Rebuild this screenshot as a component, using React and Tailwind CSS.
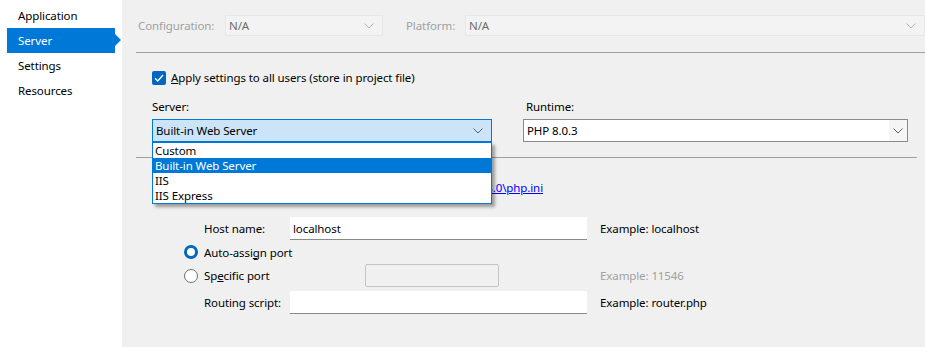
import React from 'react';

const Chevron = ({ color = '#606060' }) => (
  <svg width="10" height="6" viewBox="0 0 10 6" fill="none">
    <path d="M0.5 0.5 L5 5 L9.5 0.5" stroke={color} strokeWidth="1" />
  </svg>
);

const Combo = ({ value, className, textClass = 'text-black', chevron }) => (
  <div className={`flex items-center justify-between ${className}`}>
    <span className={`pl-[3px] ${textClass}`}>{value}</span>
    <span className="pr-[8px] flex items-center">
      <Chevron color={chevron} />
    </span>
  </div>
);

const Radio = ({ checked }) =>
  checked ? (
    <span className="w-[14px] h-[14px] rounded-full border-[3px] border-[#0067c0] bg-white inline-block" />
  ) : (
    <span className="w-[14px] h-[14px] rounded-full border border-[#6e6e6e] bg-white inline-block" />
  );

const Field = ({ label, value, example, exampleClass = 'text-black', className = '' }) => (
  <div className={`flex items-center h-[23px] ${className}`}>
    <span className="w-[86px] pl-[52px] box-content shrink-0">{label}</span>
    <div className="w-[297px] h-[23px] bg-white border-b border-[#8a8a8a] flex items-center pl-[3px]">{value}</div>
    <span className={`ml-[13px] ${exampleClass}`}>{example}</span>
  </div>
);

export default function App() {
  const nav = ['Application', 'Server', 'Settings', 'Resources'];
  return (
    <div className="flex w-[925px] h-[347px] bg-[#f0f0f0] text-[11.5px] tracking-[-0.1px] leading-[15px] text-black font-['Noto_Sans',sans-serif] overflow-hidden">
      <div className="w-[122px] bg-white pt-[3px] flex flex-col shrink-0">
        {nav.map((n) =>
          n === 'Server' ? (
            <div key={n} className="relative h-[25px] ml-[7px] w-[108px] bg-[#0078d7] text-white flex items-center pl-[11px]">
              {n}
              <span className="absolute left-[108px] top-[6px] w-0 h-0 border-y-[6px] border-y-transparent border-l-[6px] border-l-[#0078d7]" />
            </div>
          ) : (
            <div key={n} className="h-[25px] flex items-center pl-[18px]">
              {n}
            </div>
          )
        )}
      </div>

      <div className="flex-1 flex flex-col pl-[14px] relative">
        <div className="flex items-center h-[53px] pb-[1px] border-b border-[#a0a0a0] pl-[2px] text-[#a0a0a0]">
          <span className="w-[87px]">Configuration:</span>
          <Combo value="N/A" className="w-[158px] h-[21px] bg-[#f3f3f3] border border-[#e6e6e6]" textClass="text-[#6d6d6d]" chevron="#b5b5b5" />
          <span className="ml-[23px] w-[59px]">Platform:</span>
          <Combo value="N/A" className="flex-1 h-[21px] bg-[#f3f3f3] border border-[#e6e6e6]" textClass="text-[#6d6d6d]" chevron="#b5b5b5" />
        </div>

        <div className="pl-[16px]">
          <div className="flex items-center mt-[17px] h-[15px]">
            <span className="w-[14px] h-[14px] rounded-[2px] bg-[#0067c0] flex items-center justify-center">
              <svg width="10" height="8" viewBox="0 0 10 8" fill="none">
                <path d="M1 4.2 L3.8 7 L9 1" stroke="white" strokeWidth="1.3" />
              </svg>
            </span>
            <span className="ml-[5px]"><span className="underline">A</span>pply settings to all users (store in project file)</span>
          </div>

          <div className="flex mt-[14px] w-[756px]">
            <div className="w-[340px] flex flex-col relative">
              <span className="h-[17px]">Server:</span>
              <Combo value="Built-in Web Server" className="mt-[3px] h-[23px] bg-[#cce4f7] border border-[#0078d7]" chevron="#606060" />
              <div className="absolute left-0 top-[43px] w-[340px] bg-white border border-[#0078d7] shadow-[3px_3px_3px_rgba(0,0,0,0.35)] z-10 flex flex-col">
                <div className="h-[15px] flex items-center pl-[2px]">Custom</div>
                <div className="h-[15px] flex items-center pl-[2px] bg-[#0078d7] text-white">Built-in Web Server</div>
                <div className="h-[15px] flex items-center pl-[2px]">IIS</div>
                <div className="h-[15px] flex items-center pl-[2px]">IIS Express</div>
              </div>
            </div>
            <div className="w-[385px] ml-[31px] flex flex-col">
              <span className="h-[17px] pl-[3px]">Runtime:</span>
              <div className="mt-[3px] h-[23px] bg-white border border-[#8a8a8a] flex items-center justify-between">
                <span className="pl-[3px]">PHP 8.0.3</span>
                <span className="h-full w-[18px] bg-[#f5f5f5] flex items-center justify-center">
                  <Chevron />
                </span>
              </div>
            </div>
          </div>
        </div>

        <div className="mt-[15px] w-[781px] border-t border-[#a0a0a0]" />

        <div className="flex items-center mt-[22px] h-[15px] w-[407px] justify-end">
          <span>php.ini:&nbsp;</span>
          <span className="text-[#0000ff] underline">C:\php\8.0\php.ini</span>
        </div>

        <div className="flex flex-col mt-[22px] pl-[16px]">
          <Field label="Host name:" value="localhost" example="Example: localhost" />
          <div className="flex items-center h-[24px] pl-[32px]">
            <Radio checked />
            <span className="ml-[6px]">Auto-assi<span className="underline">g</span>n port</span>
          </div>
          <div className="flex items-center h-[23px] pl-[32px]">
            <Radio />
            <span className="ml-[6px] w-[161px]">Sp<span className="underline">e</span>cific port</span>
            <div className="w-[134px] h-[23px] bg-[#f0f0f0] border border-[#c4c4c4] rounded-[2px]" />
            <span className="ml-[101px] text-[#a0a0a0]">Example: 11546</span>
          </div>
          <Field label="Routing script:" value="" example="Example: router.php" className="mt-[4px]" />
        </div>
      </div>
    </div>
  );
}
